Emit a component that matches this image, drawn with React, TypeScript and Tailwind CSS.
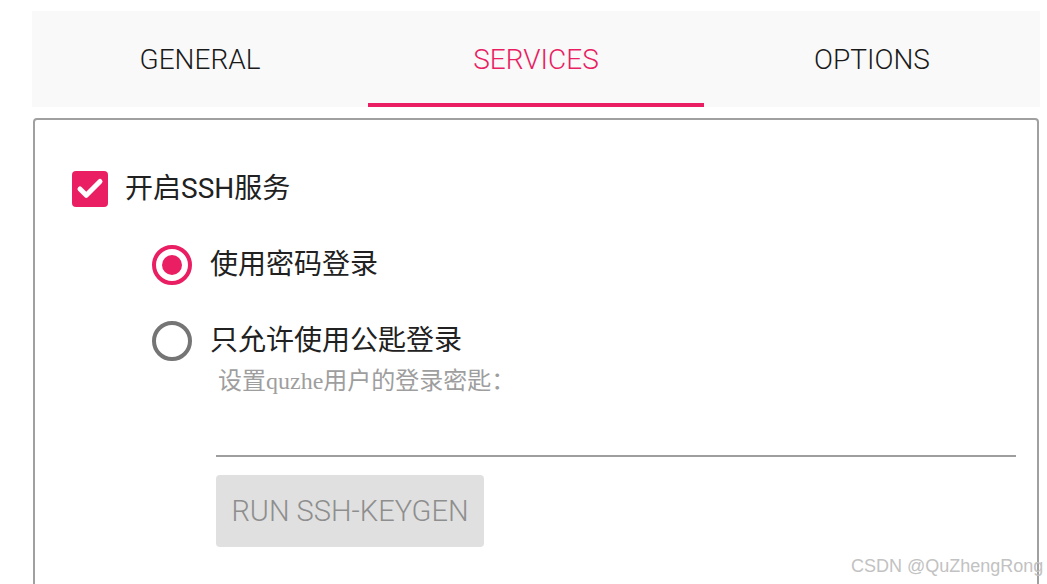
import { Check } from 'lucide-react';

const tabs = ['GENERAL', 'SERVICES', 'OPTIONS'];
const active = 1;

function Radio({ checked }: { checked: boolean }) {
  return (
    <div
      className={
        'w-[40px] h-[40px] rounded-full border-4 flex items-center justify-center shrink-0 ' +
        (checked ? 'border-[#e91e63]' : 'border-[#757575]')
      }
    >
      {checked && <div className="w-[20px] h-[20px] rounded-full bg-[#e91e63]" />}
    </div>
  );
}

export default function App() {
  return (
    <div className="relative w-[1047px] h-[584px] overflow-hidden bg-white font-['Roboto','Noto_Sans_CJK_SC',sans-serif]">
      <div className="pl-[32px] pt-[11px] w-[1040px]">
        {/* tabs */}
        <div className="flex h-[96px] bg-[#f9f9f9]">
          {tabs.map((t, i) => (
            <div key={t} className="relative flex-1 flex items-center justify-center">
              <span
                className={
                  'text-[28px] font-light leading-none pt-[2px] ' +
                  (i === active ? 'text-[#e91e63]' : 'text-[#1a1a1a]')
                }
              >
                {t}
              </span>
              {i === active && (
                <div className="absolute left-0 right-0 bottom-0 h-[4px] bg-[#e91e63]" />
              )}
            </div>
          ))}
        </div>

        {/* panel */}
        <div className="mt-[11px] mx-[1px] h-[480px] border-2 border-[#a0a0a0] rounded-t-[4px] pl-[37px]">
          <div className="mt-[51px] flex items-center h-[36px]">
            <div className="w-[36px] h-[36px] rounded-[4px] bg-[#e91e63] flex items-center justify-center">
              <Check size={30} strokeWidth={4} className="text-white" />
            </div>
            <span className="ml-[17px] text-[28px] text-[#212121] leading-none">开启SSH服务</span>
          </div>

          <div className="ml-[80px] flex flex-col">
            <div className="mt-[38px] flex items-center h-[40px]">
              <Radio checked />
              <span className="ml-[18px] text-[28px] text-[#212121] leading-none">使用密码登录</span>
            </div>
            <div className="mt-[36px] flex items-center h-[40px]">
              <Radio checked={false} />
              <span className="ml-[18px] text-[28px] text-[#212121] leading-none">只允许使用公匙登录</span>
            </div>

            <div className="ml-[66px] mt-[6px] h-[28px] flex items-center text-[24px] text-[#9e9e9e] font-['Liberation_Serif','Noto_Sans_CJK_SC',serif]">
              设置quzhe用户的登录密匙：
            </div>

            <div className="ml-[64px] mt-[60px] w-[800px] h-[2px] bg-[#9e9e9e]" />

            <div className="ml-[64px] mt-[18px] w-[268px] h-[72px] rounded-[4px] bg-[#e0e0e0] flex items-center justify-center">
              <span className="text-[29px] font-light text-[#8e8e8e] leading-none">RUN SSH-KEYGEN</span>
            </div>
          </div>
        </div>
      </div>

      <div className="absolute left-[851px] top-[557px] text-[18px] leading-none text-[#c2c2c2] font-['Liberation_Sans',sans-serif] whitespace-nowrap">
        CSDN @QuZhengRong
      </div>
    </div>
  );
}
